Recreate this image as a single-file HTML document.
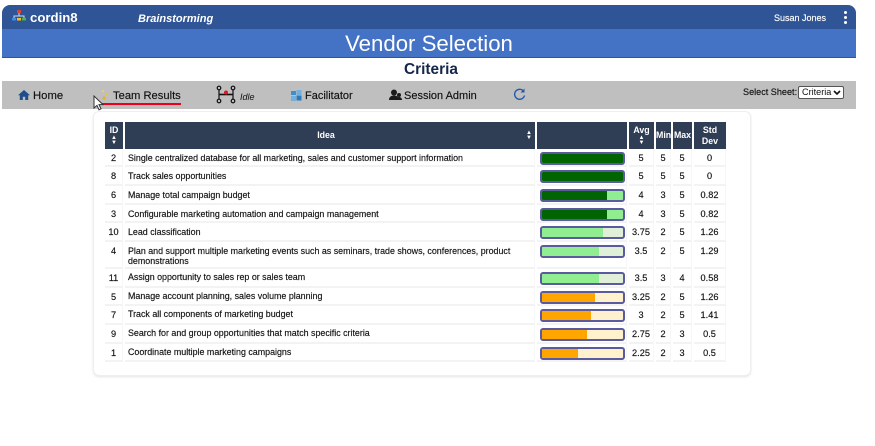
<!DOCTYPE html>
<html><head><meta charset="utf-8"><style>
html,body{margin:0;padding:0;background:#fff;}
body{width:875px;height:446px;position:relative;overflow:hidden;font-family:"Liberation Sans",Arial,sans-serif;color:#111;}
.a{position:absolute;white-space:nowrap;}
.n{-webkit-text-stroke:.15px #111;}
table{position:absolute;left:103px;top:120px;border-collapse:separate;border-spacing:2px 0;table-layout:fixed;width:625px;font-size:9.2px;-webkit-text-stroke:.15px #111;}
th{background:#2f3e55;color:#fff;font-weight:bold;font-size:8.8px;height:27px;padding:0;text-align:center;line-height:11px;border-top:2px solid #fff;position:relative;-webkit-text-stroke:0;}
tr.s18{height:18px;}tr.s19{height:19px;}tr.s26{height:26px;}
td{padding:2px 0 0;text-align:center;border-bottom:2px solid #f3f3f3;border-right:1px solid #f7f7f7;vertical-align:top;line-height:14px;}
td.i{text-align:left;padding:3.5px 0 0 3px;line-height:10.5px;font-size:8.9px;}
td.p{padding:0;}
.b{margin:3px 0 0 3px;width:81px;height:9px;border:2px solid #5a5aa0;border-radius:3px;position:relative;overflow:hidden;}
.b i{display:block;height:100%;}
.g{background:#006400;}.lg{background:#90ee90;}.o{background:#ffa500;}
.gb{background:#90ee90;}.lb{background:#e0efd8;}.ob{background:#fff1cc;}
.s{display:block;font-size:6px;line-height:5px;}
</style></head><body>
<div class="a" style="left:2px;top:5px;width:854px;height:24px;background:#2f5597;border-radius:8px 8px 0 0;"></div>
<div class="a" style="left:2px;top:29px;width:854px;height:29px;background:#4472c4;border-bottom:1px solid #2f5597;box-sizing:border-box;"></div>
<svg class="a" style="left:11px;top:9px;" width="16" height="13" viewBox="0 0 16 13"><rect x="6" y="1" width="4" height="3" fill="#d9453a"/><path d="M8 4v3M3 9V7h10v2" stroke="#cfd8e8" fill="none"/><rect x="1" y="9" width="4" height="2.5" fill="#3c8fe0"/><rect x="6" y="9" width="4" height="2.5" fill="#f0c020"/><rect x="11" y="9" width="4" height="2.5" fill="#4caf50"/></svg>
<div class="a" style="left:30px;top:10px;font-size:13.2px;font-weight:bold;color:#fff;line-height:16px;">cordin8</div>
<div class="a" style="left:138px;top:12px;font-size:11px;font-weight:bold;font-style:italic;color:#fff;line-height:14px;">Brainstorming</div>
<div class="a" style="left:774px;top:12px;font-size:9px;color:#fff;line-height:12px;-webkit-text-stroke:.15px #fff;">Susan Jones</div>
<div class="a" style="left:844px;top:11px;width:3px;height:3px;background:#fff;border-radius:50%;box-shadow:0 5px 0 #fff,0 10px 0 #fff;"></div>
<div class="a" style="left:2px;width:854px;top:30px;text-align:center;font-size:22.2px;color:#fff;line-height:28px;">Vendor Selection</div>
<div class="a" style="left:4px;width:854px;top:60px;text-align:center;font-size:15.4px;font-weight:bold;color:#14264a;line-height:19px;">Criteria</div>
<div class="a" style="left:2px;top:81px;width:854px;height:28px;background:#bfbfbf;"></div>
<svg class="a" style="left:18px;top:90px;" width="12" height="10" viewBox="0 0 12 10"><path d="M6 0L0 5.2h1.8V10h3V6.8h2.4V10h3V5.2H12z" fill="#1f4e8c"/></svg>
<div class="a n" style="left:33px;top:89px;font-size:11.3px;line-height:14px;color:#111;">Home</div>
<svg class="a" style="left:100px;top:89px;" width="10" height="13" viewBox="0 0 10 13"><circle cx="3" cy="2" r="1" fill="#f3d36b"/><circle cx="7" cy="5" r="1.2" fill="#f0c040"/><circle cx="4" cy="9" r="1.5" fill="#e9b020"/></svg>
<div class="a n" style="left:113px;top:89px;font-size:11.2px;line-height:14px;color:#111;">Team Results</div>
<div class="a" style="left:101px;top:103px;width:80px;height:2px;background:#e8001c;"></div>
<svg class="a" style="left:93px;top:95px;" width="11" height="16" viewBox="0 0 11 16"><path d="M1 1v12l3-2.6 2 4.4 2-1-2-4.2h4z" fill="#fff" stroke="#333" stroke-width="1"/></svg>
<svg class="a" style="left:216px;top:85px;" width="20" height="19" viewBox="0 0 20 19"><g fill="none" stroke="#111" stroke-width="1.2"><circle cx="3" cy="3" r="1.8"/><circle cx="17" cy="3" r="1.8"/><circle cx="3" cy="16" r="1.8"/><circle cx="17" cy="16" r="1.8"/><path d="M3 5v9M17 5v9"/></g><path d="M3 9.5h14" stroke="#111" stroke-width="1.6"/><circle cx="10" cy="7.5" r="2" fill="#e8141c"/></svg>
<div class="a" style="left:240px;top:91px;font-size:9px;font-style:italic;line-height:12px;color:#111;">Idle</div>
<svg class="a" style="left:291px;top:90px;" width="11" height="11" viewBox="0 0 11 11"><rect x="0" y="1" width="5" height="4" fill="#3d8fd0"/><rect x="5.5" y="0" width="5" height="5" fill="#6fb0de"/><rect x="0" y="6" width="5" height="5" fill="#6fb0de"/><rect x="5.5" y="5.5" width="5" height="5" fill="#2a78bd"/></svg>
<div class="a n" style="left:305px;top:89px;font-size:11px;line-height:14px;color:#111;">Facilitator</div>
<svg class="a" style="left:389px;top:89px;" width="13" height="12" viewBox="0 0 13 12"><circle cx="5" cy="3.5" r="3" fill="#1a1a1a"/><path d="M0 11c0-3 2-4.5 5-4.5s5 1.5 5 4.5z" fill="#1a1a1a"/><circle cx="10" cy="6" r="2" fill="#1a1a1a"/><path d="M7 11c0-2 1.5-3 3-3s3 1 3 3z" fill="#1a1a1a"/></svg>
<div class="a n" style="left:404px;top:89px;font-size:11px;line-height:14px;color:#111;">Session Admin</div>
<svg class="a" style="left:513px;top:88px;" width="13" height="13" viewBox="0 0 13 13"><path d="M10.8 3.5A5 5 0 1 0 11.5 7.5" fill="none" stroke="#2458a8" stroke-width="1.4"/><path d="M11.5 0.5v4h-4z" fill="#2458a8"/></svg>
<div class="a n" style="left:743px;top:86px;font-size:9.1px;line-height:12px;color:#111;">Select Sheet:</div>
<div class="a" style="left:798px;top:86px;height:11px;background:#fff;border:1px solid #555;border-radius:2px;font-size:9.1px;line-height:11px;padding-left:3px;width:41px;color:#111;">Criteria<svg style="position:absolute;right:2px;top:3px;" width="8" height="6" viewBox="0 0 8 6"><path d="M1 1l3 3 3-3" fill="none" stroke="#111" stroke-width="1.6"/></svg></div>
<div class="a" style="left:93px;top:111px;width:656px;height:263px;border:1px solid #efefef;border-radius:6px;box-shadow:0 1px 2px #e4e4e4;background:#fff;"></div>
<table>
<colgroup><col style="width:18px"><col style="width:410px"><col style="width:90px"><col style="width:25px"><col style="width:15px"><col style="width:19px"><col style="width:32px"></colgroup>
<tr><th>ID<span class="s">▲<br>▼</span></th><th style="padding-right:8px;">Idea<span class="s" style="position:absolute;right:3px;top:9px;">▲<br>▼</span></th><th></th><th>Avg<span class="s">▲<br>▼</span></th><th>Min</th><th>Max</th><th>Std<br>Dev</th></tr>
<tr class="s18"><td>2</td><td class="i">Single centralized database for all marketing, sales and customer support information</td><td class="p"><div class="b gb"><i class="g" style="width:100%"></i></div></td><td>5</td><td>5</td><td>5</td><td>0</td></tr>
<tr class="s19"><td>8</td><td class="i">Track sales opportunities</td><td class="p"><div class="b gb"><i class="g" style="width:100%"></i></div></td><td>5</td><td>5</td><td>5</td><td>0</td></tr>
<tr class="s19"><td>6</td><td class="i">Manage total campaign budget</td><td class="p"><div class="b gb"><i class="g" style="width:80%"></i></div></td><td>4</td><td>3</td><td>5</td><td>0.82</td></tr>
<tr class="s18"><td>3</td><td class="i">Configurable marketing automation and campaign management</td><td class="p"><div class="b gb"><i class="g" style="width:80%"></i></div></td><td>4</td><td>3</td><td>5</td><td>0.82</td></tr>
<tr class="s19"><td>10</td><td class="i">Lead classification</td><td class="p"><div class="b lb"><i class="lg" style="width:75%"></i></div></td><td>3.75</td><td>2</td><td>5</td><td>1.26</td></tr>
<tr class="s26"><td>4</td><td class="i">Plan and support multiple marketing events such as seminars, trade shows, conferences, product demonstrations</td><td class="p"><div class="b lb"><i class="lg" style="width:70%"></i></div></td><td>3.5</td><td>2</td><td>5</td><td>1.29</td></tr>
<tr class="s19"><td>11</td><td class="i">Assign opportunity to sales rep or sales team</td><td class="p"><div class="b lb"><i class="lg" style="width:70%"></i></div></td><td>3.5</td><td>3</td><td>4</td><td>0.58</td></tr>
<tr class="s18"><td>5</td><td class="i">Manage account planning, sales volume planning</td><td class="p"><div class="b ob"><i class="o" style="width:65%"></i></div></td><td>3.25</td><td>2</td><td>5</td><td>1.26</td></tr>
<tr class="s19"><td>7</td><td class="i">Track all components of marketing budget</td><td class="p"><div class="b ob"><i class="o" style="width:60%"></i></div></td><td>3</td><td>2</td><td>5</td><td>1.41</td></tr>
<tr class="s19"><td>9</td><td class="i">Search for and group opportunities that match specific criteria</td><td class="p"><div class="b ob"><i class="o" style="width:55%"></i></div></td><td>2.75</td><td>2</td><td>3</td><td>0.5</td></tr>
<tr class="s18"><td>1</td><td class="i">Coordinate multiple marketing campaigns</td><td class="p"><div class="b ob"><i class="o" style="width:45%"></i></div></td><td>2.25</td><td>2</td><td>3</td><td>0.5</td></tr>
</table>
</body></html>
